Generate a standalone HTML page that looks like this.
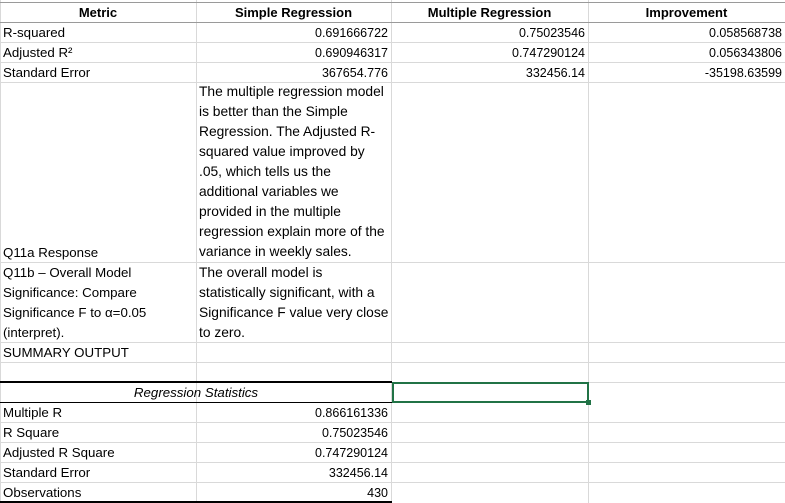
<!DOCTYPE html>
<html><head><style>
body{margin:0;width:785px;height:503px;overflow:hidden;background:#fff;font-family:"Liberation Sans",sans-serif;font-size:13.3px;color:#000}
.c{position:absolute;box-sizing:border-box;padding:0 3px;white-space:nowrap;line-height:20px;padding-top:1px}
.v{position:absolute;top:0;height:503px;width:1px;background:#d9d9d9}
.h{position:absolute;left:0;width:785px;height:1px;background:#d9d9d9}
.r{text-align:right;font-size:12.5px}
.b{font-weight:bold;text-align:center;font-size:13px}
.w{font-size:13.8px}
</style></head><body>
<div class="v" style="left:0"></div>
<div class="v" style="left:196px"></div>
<div class="v" style="left:391px"></div>
<div class="v" style="left:588px"></div>
<div class="h" style="top:2px;background:#9a9a9a"></div>
<div class="h" style="top:22px;background:#9a9a9a"></div>
<div class="h" style="top:42px"></div>
<div class="h" style="top:62px"></div>
<div class="h" style="top:82px"></div>
<div class="h" style="top:262px"></div>
<div class="h" style="top:342px"></div>
<div class="h" style="top:362px"></div>
<div class="h" style="top:382px"></div>
<div class="h" style="top:422px"></div>
<div class="h" style="top:442px"></div>
<div class="h" style="top:462px"></div>
<div class="h" style="top:482px"></div>
<div style="position:absolute;left:0;top:381px;width:392px;height:2px;background:#000"></div>
<div style="position:absolute;left:0;top:402px;width:392px;height:1px;background:#000"></div>
<div style="position:absolute;left:0;top:501px;width:392px;height:2px;background:#000"></div>
<div style="position:absolute;left:392px;top:382px;width:197px;height:21px;border:2px solid #217346;box-sizing:border-box"></div>
<div style="position:absolute;left:586px;top:400px;width:5px;height:5px;background:#217346"></div>

<div class="c b" style="left:0;top:2px;width:196px">Metric</div>
<div class="c b" style="left:196px;top:2px;width:195px">Simple Regression</div>
<div class="c b" style="left:391px;top:2px;width:197px">Multiple Regression</div>
<div class="c b" style="left:588px;top:2px;width:197px">Improvement</div>

<div class="c" style="left:0;top:22px">R-squared</div>
<div class="c" style="left:0;top:42px">Adjusted R²</div>
<div class="c" style="left:0;top:62px">Standard Error</div>
<div class="c r" style="left:196px;top:22px;width:195px">0.691666722</div>
<div class="c r" style="left:196px;top:42px;width:195px">0.690946317</div>
<div class="c r" style="left:196px;top:62px;width:195px">367654.776</div>
<div class="c r" style="left:391px;top:22px;width:197px">0.75023546</div>
<div class="c r" style="left:391px;top:42px;width:197px">0.747290124</div>
<div class="c r" style="left:391px;top:62px;width:197px">332456.14</div>
<div class="c r" style="left:588px;top:22px;width:197px">0.058568738</div>
<div class="c r" style="left:588px;top:42px;width:197px">0.056343806</div>
<div class="c r" style="left:588px;top:62px;width:197px">-35198.63599</div>

<div class="c w" style="left:196px;top:81px">The multiple regression model<br>is better than the Simple<br>Regression. The Adjusted R-<br>squared value improved by<br>.05, which tells us the<br>additional variables we<br>provided in the multiple<br>regression explain more of the<br>variance in weekly sales.</div>
<div class="c" style="left:0;top:242px">Q11a Response</div>
<div class="c" style="left:0;top:262px">Q11b – Overall Model<br>Significance: Compare<br>Significance F to α=0.05<br>(interpret).</div>
<div class="c w" style="left:196px;top:262px">The overall model is<br>statistically significant, with a<br>Significance F value very close<br>to zero.</div>
<div class="c" style="left:0;top:342px">SUMMARY OUTPUT</div>

<div class="c" style="left:0;top:383px;width:392px;text-align:center;font-style:italic;padding-top:0">Regression Statistics</div>
<div class="c" style="left:0;top:402px">Multiple R</div>
<div class="c" style="left:0;top:422px">R Square</div>
<div class="c" style="left:0;top:442px">Adjusted R Square</div>
<div class="c" style="left:0;top:462px">Standard Error</div>
<div class="c" style="left:0;top:482px">Observations</div>
<div class="c r" style="left:196px;top:402px;width:195px">0.866161336</div>
<div class="c r" style="left:196px;top:422px;width:195px">0.75023546</div>
<div class="c r" style="left:196px;top:442px;width:195px">0.747290124</div>
<div class="c r" style="left:196px;top:462px;width:195px">332456.14</div>
<div class="c r" style="left:196px;top:482px;width:195px">430</div>
</body></html>
